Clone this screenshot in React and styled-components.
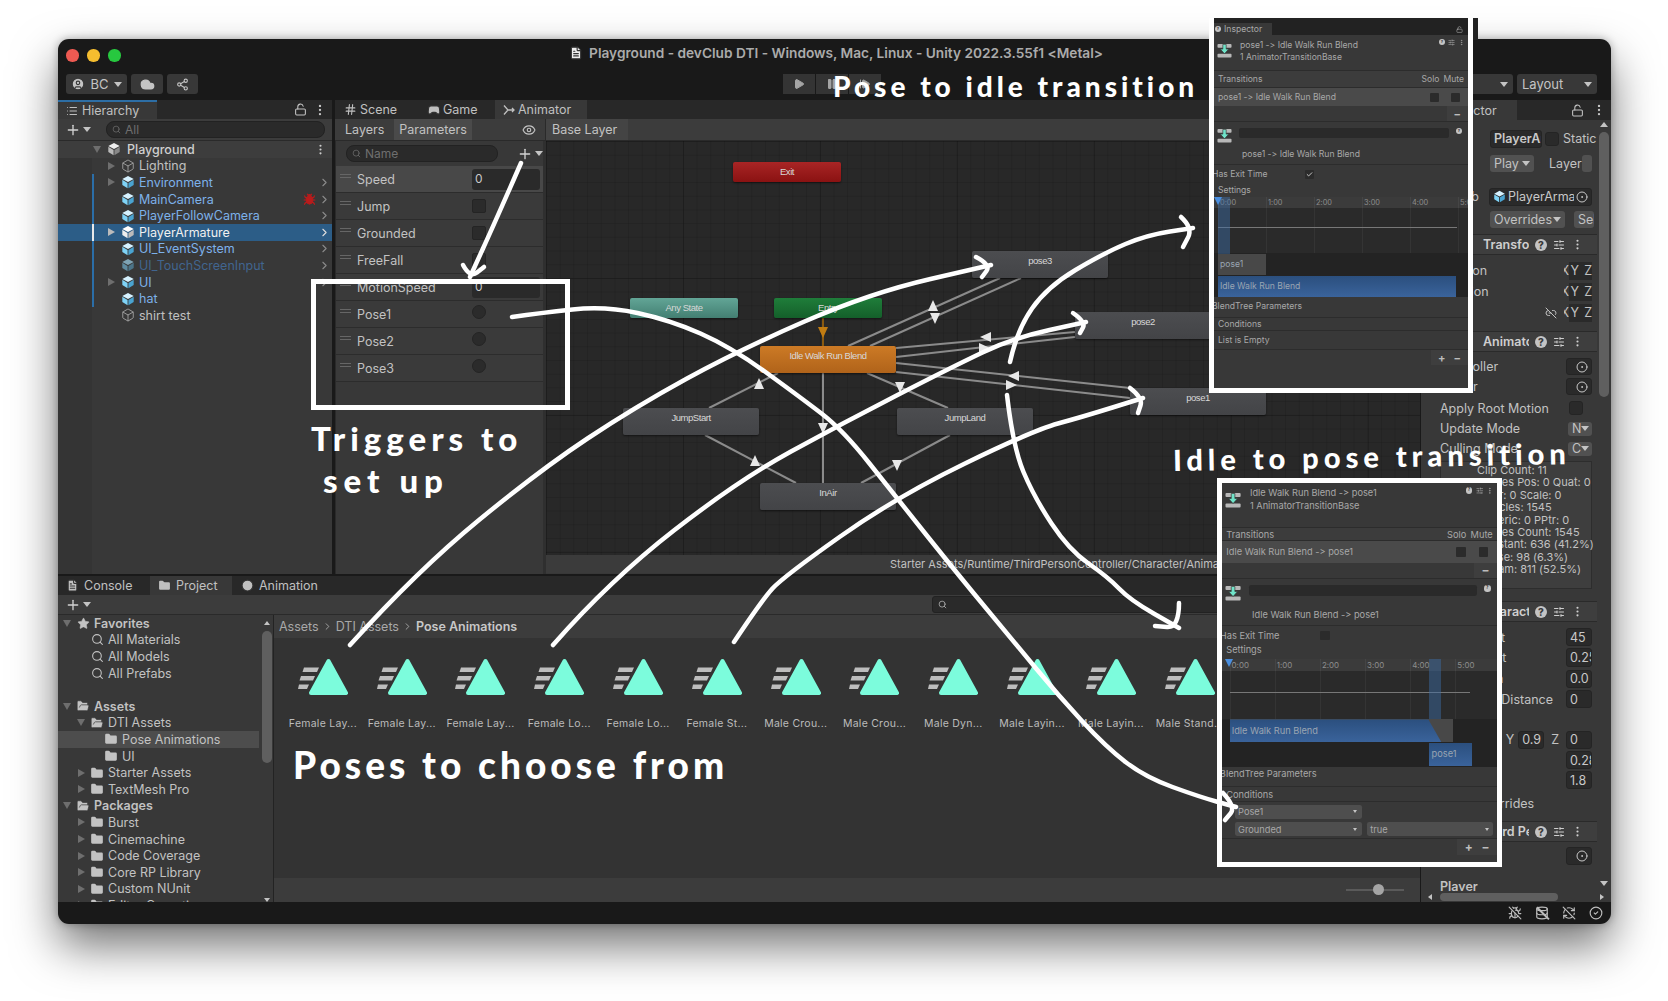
import React from 'react';
import styled, { createGlobalStyle } from 'styled-components';
import {
  Box,
  BugOff,
  Check,
  ChevronRight,
  CircleDot,
  CircleUser,
  Clock,
  Cloud,
  Database,
  EllipsisVertical,
  Eye,
  FileText,
  Folder,
  FolderOpen,
  Gamepad2,
  Hash,
  Link2Off,
  List,
  LockOpen,
  Pause,
  Play,
  Plus,
  RefreshCwOff,
  Search,
  Share2,
  SlidersHorizontal,
  Star,
  StepForward,
  Bug,
  Layers,
  CircleCheck,
} from 'lucide-react';

const GlobalStyle = createGlobalStyle`
  html, body { margin: 0; padding: 0; background: #fff; }
  body { font-family: Inter, "Liberation Sans", sans-serif; overflow: hidden; font-variant-ligatures: none; font-feature-settings: "calt" 0; }
  * { box-sizing: border-box; }
`;

//PAGE + WINDOW
const Page = styled.div`
  position: relative;
  width: 1668px;
  height: 1001px;
  padding: 39px 0 0 58px;
  overflow: hidden;
`;
const Window = styled.div`
  width: 1553px;
  height: 885px;
  background: #191919;
  border-radius: 11px;
  overflow: hidden;
  display: flex;
  flex-direction: column;
  color: #c2c2c2;
  font-size: 12.5px;
  box-shadow: 0 22px 46px rgba(0, 0, 0, 0.55), 0 0 8px rgba(0, 0, 0, 0.3);
`;
const TitleBar = styled.div`
  height: 31px;
  flex: none;
  padding: 0 0 3px 8px;
  display: grid;
  grid-template-columns: 1fr auto 1fr;
  align-items: center;
`;
const Lights = styled.div`
  display: flex;
  gap: 8.5px;
  padding-top: 5px;
`;
const Light = styled.span`
  width: 12.5px;
  height: 12.5px;
  border-radius: 50%;
  background: ${(p) => p.$c};
`;
const Title = styled.div`
  display: flex;
  align-items: center;
  gap: 6px;
  margin-right: 5px;
  font-weight: 600;
  font-size: 13.7px;
  color: #ababab;
  white-space: nowrap;
`;
const ToolBar = styled.div`
  height: 30px;
  flex: none;
  padding: 4px 14px 6px 8px;
  display: grid;
  grid-template-columns: 1fr auto 1fr;
`;
const ToolGroup = styled.div`
  display: flex;
  gap: ${(p) => p.$tight ? 1 : 4}px;
  justify-content: ${(p) => p.$end ? 'flex-end' : 'flex-start'};
`;
const ToolButton = styled.div`
  width: ${(p) => p.$w}px;
  height: 20px;
  background: #383838;
  border-radius: 3px;
  display: flex;
  align-items: center;
  justify-content: ${(p) => p.$spread ? 'space-between' : 'center'};
  padding: 0 ${(p) => p.$spread ? 5 : 0}px;
  gap: 5px;
  font-size: 13px;
  color: #c4c4c4;
`;
const PlayButton = styled(ToolButton)`
  background: #343434;
  border-radius: 0;
  color: #a4a4a4;
`;
const ToolLabel = styled.span`
  display: flex;
  align-items: center;
  gap: 4px;
`;
const Caret = styled.span`
  width: 0;
  height: 0;
  flex: none;
  border-left: ${(p) => p.$s || 4}px solid transparent;
  border-right: ${(p) => p.$s || 4}px solid transparent;
  border-top: ${(p) => (p.$s || 4) + 1}px solid #c4c4c4;
`;
const Workspace = styled.div`
  flex: 1;
  min-height: 0;
  display: flex;
  gap: 1px;
`;
const LeftColumn = styled.div`
  width: 1362px;
  flex: none;
  display: flex;
  flex-direction: column;
`;
const TopRow = styled.div`
  height: 474px;
  flex: none;
  display: flex;
  gap: 3px;
`;
const StatusBar = styled.div`
  height: 22px;
  flex: none;
  display: flex;
  justify-content: flex-end;
  align-items: center;
  gap: 13px;
  padding-right: 8px;
  color: #bdbdbd;
`;
const Slashed = styled.span`
  position: relative;
  display: flex;
  &::after {
    content: '';
    position: absolute;
    left: 7px;
    top: -1px;
    width: 1.5px;
    height: 17px;
    background: #bdbdbd;
    transform: rotate(-45deg);
  }
`;

//PANELS AND TABS
const Panel = styled.div`
  background: #383838;
  display: flex;
  flex-direction: column;
  min-width: 0;
  ${(p) => p.$w ? `width: ${p.$w}px; flex: none;` : 'flex: 1;'}
`;
const TabStrip = styled.div`
  height: ${(p) => p.$h || 19}px;
  flex: none;
  background: #282828;
  display: flex;
  align-items: center;
`;
const Tab = styled.div`
  width: ${(p) => p.$w}px;
  height: 100%;
  display: flex;
  align-items: center;
  gap: ${(p) => p.$gap || 5}px;
  padding-left: ${(p) => p.$pl || 8}px;
  font-size: 12.5px;
  color: #c0c0c0;
  background: ${(p) => p.$active ? '#383838' : 'transparent'};
  ${(p) => p.$accent && 'border-top: 2px solid #2d6ea5;'}
`;
const StripTools = styled.div`
  margin-left: auto;
  display: flex;
  align-items: center;
  gap: ${(p) => p.$gap || 5}px;
  padding-right: 5px;
`;
const SubBar = styled.div`
  height: ${(p) => p.$h || 22}px;
  flex: none;
  background: #3c3c3c;
  border-bottom: 1px solid #2a2a2a;
  display: flex;
  align-items: center;
`;
const SearchBox = styled.div`
  height: 17px;
  background: #2a2a2a;
  border: 1px solid #222;
  border-radius: ${(p) => p.$r || 8}px;
  width: ${(p) => p.$w}px;
  margin-left: ${(p) => p.$ml || 0}px;
  display: flex;
  align-items: center;
  gap: 4px;
  padding-left: 5px;
  font-size: 12px;
  color: #6f6f6f;
`;
const AddButton = styled.div`
  display: flex;
  align-items: center;
  gap: 2px;
  margin-left: ${(p) => p.$ml || 7}px;
  color: #d2d2d2;
`;

//HIERARCHY
const HierRows = styled.div`
  flex: 1;
  background: linear-gradient(90deg, #343434 34px, #383838 34px);
`;
const SceneRow = styled.div`
  height: 16.6px;
  background: #3d3d3d;
  display: flex;
  align-items: center;
  gap: 6px;
  padding: 0 5px 0 35px;
  font-weight: 500;
  color: #d0d0d0;
`;
const HierRow = styled.div`
  height: 16.6px;
  display: flex;
  align-items: center;
  padding-left: 34px;
  padding-right: 1px;
  background: ${(p) => p.$selected ? '#2c5d87' : 'transparent'};
`;
const PrefabBar = styled.span`
  width: 2px;
  height: 100%;
  flex: none;
  background: ${(p) => p.$selected ? '#e8e8e8' : p.$on ? '#2b6ea8' : 'transparent'};
`;
const ArrowSlot = styled.span`
  width: 27px;
  flex: none;
  padding-left: 14px;
  display: flex;
  align-items: center;
`;
const Arrow = styled.span`
  width: 0;
  height: 0;
  flex: none;
  border-top: 4.5px solid transparent;
  border-bottom: 4.5px solid transparent;
  border-left: 7px solid ${(p) => p.$light ? '#bbb' : '#6e6e6e'};
  ${(p) => p.$open && `
    border: 0 solid transparent;
    border-left: 4.5px solid transparent;
    border-right: 4.5px solid transparent;
    border-top: 7px solid #6e6e6e;
  `}
`;
const HierName = styled.span`
  margin-left: 4px;
  white-space: nowrap;
  font-size: 12.5px;
  color: ${(p) => p.$kind === 'selected' ? '#f0f0f0' : p.$kind === 'prefab' ? '#7db1ea' : p.$kind === 'off' ? '#41658f' : '#c0c0c0'};
`;
const RowEnd = styled.span`
  margin-left: auto;
  display: flex;
  align-items: center;
  gap: 2px;
  color: #8a8a8a;
`;

//ANIMATOR
const AnimatorBody = styled.div`
  flex: 1;
  min-height: 0;
  display: flex;
`;
const LayerTab = styled.div`
  height: 100%;
  padding: 0 ${(p) => p.$active ? 5 : 10}px;
  display: flex;
  align-items: center;
  font-size: 12.5px;
  background: ${(p) => p.$active ? '#4a4a4a' : 'transparent'};
`;
const EyeSlot = styled.span`
  margin-left: auto;
  display: flex;
`;
const BaseLayer = styled.div`
  width: 875px;
  flex: none;
  height: 100%;
  margin-left: 9px;
  padding: 0 12px 0 6px;
  display: flex;
  align-items: center;
  border-left: 1px solid #2a2a2a;
  background: linear-gradient(90deg, #444 82px, #3c3c3c 82px);
`;
const ParamList = styled.div`
  width: 211px;
  flex: none;
  border-left: 1px solid #2a2a2a;
  border-right: 3px solid #2f2f2f;
`;
const ParamSearch = styled.div`
  height: 25px;
  display: flex;
  align-items: center;
  padding-left: 10px;
`;
const ParamRow = styled.div`
  height: 27px;
  display: flex;
  align-items: center;
  padding-left: 4px;
  border-bottom: 1px solid #2c2c2c;
  background: ${(p) => p.$active ? '#484848' : '#3a3a3a'};
`;
const Grip = styled.span`
  width: 11px;
  height: 4px;
  flex: none;
  margin-bottom: 6px;
  border-top: 1px solid #666;
  border-bottom: 1px solid #666;
`;
const ParamName = styled.span`
  margin-left: 6px;
  width: 115px;
  flex: none;
  font-size: 12.5px;
`;
const NumberField = styled.span`
  width: 68px;
  height: 21px;
  background: #2a2a2a;
  border-radius: 3px;
  padding: 2px 3px;
  font-size: 12px;
  color: #c8c8c8;
`;
const CheckField = styled.span`
  width: 14px;
  height: 14px;
  background: #2b2b2b;
  border-radius: ${(p) => p.$round ? '50%' : '2px'};
  border: 1px solid #242424;
  margin-bottom: ${(p) => p.$round ? 5 : 0}px;
`;
const GraphColumn = styled.div`
  flex: 1;
  min-width: 0;
  display: flex;
  flex-direction: column;
`;
const Graph = styled.div`
  position: relative;
  height: 414px;
  flex: none;
  overflow: hidden;
  background-color: #282828;
  background-image:
    linear-gradient(rgba(0, 0, 0, 0.16) 1px, transparent 1px),
    linear-gradient(90deg, rgba(0, 0, 0, 0.16) 1px, transparent 1px),
    linear-gradient(rgba(0, 0, 0, 0.1) 1px, transparent 1px),
    linear-gradient(90deg, rgba(0, 0, 0, 0.1) 1px, transparent 1px);
  background-size: 137px 137px, 137px 137px, 13.7px 13.7px, 13.7px 13.7px;
`;
const NODE_FILL = {
  red: 'linear-gradient(#a92525, #8a1212)',
  teal: 'linear-gradient(#62a596, #437f72)',
  green: 'linear-gradient(#1f7d3a, #145f2a)',
  orange: 'linear-gradient(#cc7a25, #b0631a)',
  gray: 'linear-gradient(#4c4d50, #434447)',
};
const StateNode = styled.div`
  position: absolute;
  left: ${(p) => p.$x - 546}px;
  top: ${(p) => p.$y - 141}px;
  width: ${(p) => p.$short ? 108 : 136}px;
  height: ${(p) => p.$short ? 20 : 27}px;
  padding-top: 4px;
  border-radius: 2px;
  background: ${(p) => NODE_FILL[p.$fill || 'gray']};
  box-shadow: 0 1px 2px rgba(0, 0, 0, 0.5);
  text-align: center;
  font-family: "Liberation Sans", sans-serif;
  font-size: 9.5px;
  letter-spacing: -0.45px;
  color: #d8d8d8;
`;
const LinesSvg = styled.svg`
  position: absolute;
  inset: 0;
`;
const PathBar = styled.div`
  height: 18px;
  flex: none;
  background: #3b3b3b;
  padding: 2px 0 0 344px;
  font-size: 11px;
  white-space: nowrap;
  overflow: hidden;
`;

//PROJECT
const ProjectPanel = styled.div`
  flex: 1;
  min-height: 0;
  margin-top: 2px;
  background: #383838;
  display: flex;
  flex-direction: column;
`;
const ProjectBody = styled.div`
  flex: 1;
  min-height: 0;
  display: flex;
  gap: 1px;
  background: #232323;
`;
const TreePane = styled.div`
  width: 215px;
  flex: none;
  background: #383838;
  position: relative;
  overflow: hidden;
`;
const TreeRow = styled.div`
  height: 16.6px;
  width: 201px;
  display: flex;
  align-items: center;
  padding-left: ${(p) => 4 + 14 * p.$depth}px;
  background: ${(p) => p.$selected ? '#4d4d4d' : 'transparent'};
  font-weight: ${(p) => p.$bold ? 600 : 400};
  font-size: 12.5px;
  white-space: nowrap;
`;
const TreeArrow = styled.span`
  width: 10px;
  margin-right: 4px;
  flex: none;
  display: flex;
  justify-content: center;
`;
const TreeIcon = styled.span`
  width: 14px;
  flex: none;
  margin-right: 4px;
  display: flex;
  justify-content: center;
  color: #c2c2c2;
`;
const TreeGap = styled.div`
  height: 16.6px;
`;
const ScrollRail = styled.div`
  position: absolute;
  right: 1px;
  top: 0;
  bottom: 0;
  width: 11px;
  padding-top: 6px;
  display: flex;
  flex-direction: column;
  align-items: center;
  gap: 6px;
`;
const ScrollThumb = styled.span`
  width: 10px;
  height: ${(p) => p.$h}px;
  border-radius: 5px;
  background: #5f5f5f;
`;
const Spacer = styled.span`
  flex: 1;
`;
const UpCaret = styled(Caret)`
  transform: rotate(180deg);
`;
const BrowserPane = styled.div`
  flex: 1;
  min-width: 0;
  display: flex;
  flex-direction: column;
  background: #333;
`;
const Breadcrumbs = styled.div`
  height: 23px;
  flex: none;
  background: #3c3c3c;
  padding-left: 5px;
  display: flex;
  align-items: center;
  gap: 3px;
  font-size: 12.5px;
  color: #a8a8a8;
`;
const CrumbNow = styled.span`
  font-weight: 600;
  color: #c8c8c8;
`;
const AssetGrid = styled.div`
  flex: 1;
  display: flex;
  padding: 20px 0 0 9.5px;
  overflow: hidden;
`;
const Tile = styled.div`
  width: 78.8px;
  flex: none;
  display: flex;
  flex-direction: column;
  align-items: center;
`;
const TileLabel = styled.span`
  margin-top: 21px;
  font-size: 10.5px;
  letter-spacing: 0.25px;
  white-space: nowrap;
  color: #bcbcbc;
`;
const BrowserFoot = styled.div`
  height: 24px;
  flex: none;
  background: #3c3c3c;
  display: flex;
  justify-content: flex-end;
  align-items: center;
  padding-right: 16px;
`;
const ZoomSlider = styled.div`
  position: relative;
  width: 58px;
  height: 2px;
  background: #5a5a5a;
`;
const ZoomKnob = styled.span`
  position: absolute;
  left: 27px;
  top: -5px;
  width: 11px;
  height: 11px;
  border-radius: 50%;
  background: #a5a5a5;
`;

//INSPECTOR
const InspectorPanel = styled(Panel)`
  position: relative;
  overflow: hidden;
`;
const InspectorBody = styled.div`
  width: 176px;
  flex: 1;
  padding-top: 9px;
  overflow: hidden;
  white-space: nowrap;
`;
const InsRow = styled.div`
  height: ${(p) => p.$h || 21}px;
  margin-top: ${(p) => p.$mt || 0}px;
  padding: 0 5px 0 ${(p) => p.$pl === undefined ? 19 : p.$pl}px;
  display: flex;
  align-items: center;
  font-size: 12.5px;
`;
const InsLabel = styled.span`
  flex: none;
  width: ${(p) => p.$w ? `${p.$w}px` : 'auto'};
  margin-left: ${(p) => p.$auto ? 'auto' : `${p.$ml || 0}px`};
  font-weight: ${(p) => p.$bold ? 600 : 400};
`;
const InsField = styled.span`
  flex: none;
  width: ${(p) => p.$w}px;
  height: ${(p) => p.$h || 18}px;
  margin-left: ${(p) => p.$ml === undefined ? 'auto' : `${p.$ml}px`};
  margin-right: ${(p) => p.$mr || 0}px;
  background: #2a2a2a;
  border: 1px solid #242424;
  border-radius: 3px;
  padding: 0 3px;
  display: flex;
  align-items: center;
  justify-content: ${(p) => p.$target ? 'flex-end' : 'flex-start'};
  gap: 2px;
  overflow: hidden;
  color: #c8c8c8;
  font-weight: ${(p) => p.$bold ? 600 : 400};
`;
const FieldText = styled.span`
  flex: 1;
  overflow: hidden;
`;
const InsDrop = styled.span`
  flex: none;
  width: ${(p) => p.$w}px;
  height: ${(p) => p.$h || 17}px;
  margin-left: ${(p) => p.$ml === undefined ? 'auto' : `${p.$ml}px`};
  background: #515151;
  border-radius: 3px;
  padding: 0 4px;
  display: flex;
  align-items: center;
  justify-content: space-between;
  overflow: hidden;
`;
const InsSection = styled.div`
  height: 21px;
  margin-top: ${(p) => p.$mt || 0}px;
  padding: 0 7px 0 62px;
  background: #3e3e3e;
  border-top: 1px solid #2a2a2a;
  border-bottom: 1px solid #2a2a2a;
  display: flex;
  align-items: center;
  gap: 6px;
  font-weight: 600;
  font-size: 12.5px;
  color: #cfcfcf;
`;
const SectionTitle = styled.span`
  width: 46px;
  flex: none;
  overflow: hidden;
`;
const Help = styled.span.attrs({ children: '?' })`
  width: ${(p) => p.$s || 12}px;
  height: ${(p) => p.$s || 12}px;
  flex: none;
  border-radius: 50%;
  background: #c4c4c4;
  color: #383838;
  font-size: ${(p) => (p.$s || 12) - 2}px;
  line-height: ${(p) => p.$s || 12}px;
  font-weight: 800;
  text-align: center;
`;
const Axis = styled.span`
  width: ${(p) => p.$w}px;
  height: 18px;
  flex: none;
  overflow: hidden;
  display: flex;
  justify-content: flex-end;
  align-items: center;
  margin-left: ${(p) => p.$auto ? 'auto' : 0};
  background: ${(p) => p.$dark ? '#2a2a2a' : 'transparent'};
`;
const InfoBox = styled.div`
  width: 152px;
  height: 128px;
  margin: 3px 0 0 19px;
  border: 1px solid #2d2d2d;
  padding: 2px 0 0 36px;
  background: #3e3e3e;
  font-size: 11px;
  line-height: 12.4px;
`;
const VScroll = styled.div`
  position: absolute;
  right: 2px;
  top: 22px;
  bottom: 16px;
  width: 10px;
  display: flex;
  flex-direction: column;
  align-items: center;
  gap: 5px;
`;
const HScroll = styled.div`
  height: 11px;
  flex: none;
  padding: 0 6px;
  display: flex;
  align-items: center;
  gap: 6px;
`;
const HThumb = styled.span`
  width: 118px;
  height: 8px;
  margin-left: 1px;
  margin-right: auto;
  border-radius: 4px;
  background: #5f5f5f;
`;
const LeftCaret = styled(Caret)`
  transform: rotate(90deg);
`;
const RightCaret = styled(Caret)`
  transform: rotate(-90deg);
`;

//PASTED TRANSITION SHOTS
const ShotFrame = styled.div`
  position: absolute;
  left: ${(p) => p.$x}px;
  top: ${(p) => p.$y}px;
  width: ${(p) => p.$w}px;
  height: ${(p) => p.$h}px;
  border: 5px solid #fff;
  border-top-width: ${(p) => p.$topW}px;
  background: #383838;
  overflow: hidden;
`;
const ShotInner = styled.div`
  zoom: ${(p) => p.$zoom};
  color: #a8a8a8;
  font-size: 8.6px;
  white-space: nowrap;
`;
const ShotTabs = styled.div`
  height: 17px;
  background: #222;
  padding-top: 5px;
  display: flex;
`;
const ShotTab = styled.div`
  width: 58px;
  background: #383838;
  display: flex;
  align-items: center;
  gap: 3px;
  padding-left: 1px;
`;
const ShotHeader = styled.div`
  height: ${(p) => p.$h}px;
  display: flex;
  padding: ${(p) => p.$pt}px 3px 0 3px;
  gap: 8px;
  border-bottom: 1px solid #2c2c2c;
  line-height: 12px;
`;
const ShotIconWrap = styled.span`
  margin-top: 4px;
`;
const ShotHelp = styled.span`
  margin-left: auto;
  display: flex;
  gap: 3px;
`;
const ShotBar = styled.div`
  height: ${(p) => p.$h}px;
  display: flex;
  align-items: center;
  padding: 0 ${(p) => p.$pr === undefined ? 4 : p.$pr}px ${(p) => p.$pb || 0}px 4px;
  background: ${(p) => p.$bg || 'transparent'};
  border-bottom: ${(p) => p.$line ? '1px solid #2c2c2c' : '0'};
`;
const CutLabel = styled.span`
  margin-left: -6px;
  width: ${(p) => p.$w ? `${p.$w}px` : 'auto'};
  flex: none;
`;
const MiniCheck = styled.span`
  width: 9px;
  height: 9px;
  flex: none;
  margin-left: ${(p) => p.$first ? 'auto' : `${p.$ml || 0}px`};
  margin-right: ${(p) => p.$mr || 0}px;
  border-radius: 1px;
  background: #2b2b2b;
  display: flex;
  align-items: center;
  justify-content: center;
  color: #ddd;
`;
const HeadCells = styled.span`
  margin-left: auto;
  display: flex;
  gap: 4px;
`;
const FootTab = styled.span`
  margin-left: auto;
  height: 100%;
  padding: 0 7px;
  background: #3e3e3e;
  display: flex;
  align-items: center;
  gap: 8px;
  font-size: 11px;
  font-weight: 700;
  color: #bdbdbd;
`;
const ShotSection = styled.div`
  height: ${(p) => p.$h}px;
  position: relative;
  display: flex;
  padding: 6px 6px 0 3px;
  gap: 7px;
  border-bottom: 1px solid #2c2c2c;
`;
const ShotInput = styled.span`
  flex: 1;
  height: 10px;
  background: #2a2a2a;
  border-radius: 2px;
`;
const ShotCaption = styled.span`
  position: absolute;
  left: 28px;
  bottom: 5px;
`;
const Timeline = styled.div`
  position: relative;
  height: 100px;
  overflow: hidden;
  background: linear-gradient(#3b3b3b 11px, #2a2a2a 11px, #2a2a2a 56px, #232323 56px);
`;
const RulerMark = styled.span`
  position: absolute;
  top: 0;
  height: 56px;
  left: ${(p) => p.$x}px;
  padding: 1px 0 0 1px;
  font-size: 7.4px;
  line-height: 10px;
  color: #8d8d8d;
  border-left: 1px solid rgba(255, 255, 255, 0.05);
`;
const CurveLine = styled.span`
  position: absolute;
  left: ${(p) => p.$x}px;
  width: ${(p) => p.$w}px;
  top: 30px;
  height: 1px;
  background: #777;
`;
const BlendColumn = styled.span`
  position: absolute;
  left: ${(p) => p.$x}px;
  width: ${(p) => p.$w}px;
  top: 0;
  height: ${(p) => p.$h}px;
  background: rgba(60, 110, 170, 0.45);
`;
const PlayHead = styled.span`
  position: absolute;
  left: ${(p) => p.$x}px;
  top: 0;
  width: 0;
  height: 0;
  border-left: 4.5px solid transparent;
  border-right: 4.5px solid transparent;
  border-top: 8px solid #4a8fe0;
`;
const Clip = styled.span`
  position: absolute;
  left: ${(p) => p.$x}px;
  width: ${(p) => p.$w}px;
  top: ${(p) => p.$y}px;
  height: 21px;
  padding: 5px 2px 0;
  color: #9aa5b2;
  background: ${(p) => p.$blue ? 'linear-gradient(#2b4f7e, #3a639b)' : '#484848'};
  clip-path: ${(p) => p.$taper ? 'polygon(0 0, calc(100% - 12px) 0, 100% 100%, 0 100%)' : 'none'};
`;
const ConditionList = styled.div`
  padding: 1px 0 0;
  border-bottom: 1px solid #2c2c2c;
`;
const ConditionRow = styled.div`
  height: 16px;
  display: flex;
  align-items: center;
  gap: 5px;
  padding-left: 12px;
`;
const ConditionSelect = styled.span`
  width: ${(p) => p.$w}px;
  height: 13px;
  background: #4e4e4e;
  border-radius: 2px;
  padding: 0 4px 0 3px;
  display: flex;
  align-items: center;
  justify-content: space-between;
`;

//MARKUP ON TOP OF THE SCREENSHOT
const InkLayer = styled.svg`
  position: absolute;
  inset: 0;
  pointer-events: none;
`;
const Note = styled.span`
  position: absolute;
  left: ${(p) => p.$x}px;
  top: ${(p) => p.$y}px;
  font-family: Lato, "Open Sans", sans-serif;
  font-weight: 900;
  font-size: ${(p) => p.$size}px;
  letter-spacing: ${(p) => p.$ls}px;
  line-height: 1;
  color: #fff;
  white-space: nowrap;
  transform: rotate(${(p) => p.$rot || 0}deg);
  transform-origin: left center;
`;
const PasteEdge = styled.span`
  position: absolute;
  left: 1473px;
  top: 18px;
  width: 5px;
  height: 22px;
  background: #222;
`;
const InkBox = styled.div`
  position: absolute;
  left: 311px;
  top: 279px;
  width: 259px;
  height: 131px;
  border: 5px solid #fff;
`;

const CubeIcon = ({ size = 14, color = '#7fd3f7', side = '#4aa3d0', top = '#d6f2ff' }) => (
  <svg width={size} height={size} viewBox='0 0 16 16' style={{ flex: 'none' }}>
    <path d='M8 1 14.5 4.5 8 8 1.5 4.5z' fill={top} />
    <path d='M1.5 5.5 7.5 9v6l-6-3.5z' fill={color} />
    <path d='M14.5 5.5 8.5 9v6l6-3.5z' fill={side} />
  </svg>
);

const AnimatorIcon = () => (
  <svg width='12' height='12' viewBox='0 0 12 12' fill='none' stroke='#c0c0c0' strokeWidth='1.3'>
    <path d='M1 1.5 5 6 1 10.5M5 6h6M9 4l2 2-2 2' />
  </svg>
);

const TransitionIcon = ({ size = 15 }) => (
  <svg width={size} height={size} viewBox='0 0 16 16' style={{ flex: 'none' }}>
    <rect x='0.5' y='1' width='15' height='4' rx='1' fill='#b8b8b8' />
    <rect x='0.5' y='11.5' width='15' height='4' rx='1' fill='#b8b8b8' />
    <path d='M6.2 1.5h3.6v5h2.7L8 11.5 3.5 6.5h2.7z' fill='#6fe3c8' stroke='#383838' strokeWidth='.7' />
  </svg>
);

const AssetIcon = () => (
  <svg width='50' height='38' viewBox='0 0 50 38'>
    <path d='M6 9.5h15l-2 4.5H4.5z M3 18h14l-2 4.5H1.5z M1 26.5h10l-2 4.5H0z' fill='#bdbdbd' />
    <polygon points='30.5,3 48,35 13,35' fill='#7cfcdc' stroke='#7cfcdc' strokeWidth='4' strokeLinejoin='round' />
  </svg>
);

const Tri = ({ x, y, a = 0, fill = '#e8e8e8' }) => (
  <polygon points='0,6 -5,-5 5,-5' fill={fill} transform={`translate(${x} ${y}) rotate(${a})`} />
);

// state machine lines, in window coordinates
const LINKS = [
  [848, 346, 1000, 278], [870, 346, 1021, 278],
  [896, 348, 1075, 332], [896, 357, 1075, 337],
  [896, 363, 1130, 388], [896, 372, 1130, 398],
  [823, 373, 823, 483],
  [709, 408, 778, 373], [867, 373, 948, 408],
  [705, 435, 796, 483], [950, 435, 861, 483],
];

const hierarchy = [
  { name: 'Lighting', arrow: true, kind: 'plain' },
  { name: 'Environment', arrow: true, kind: 'prefab', bar: true, more: true },
  { name: 'MainCamera', kind: 'prefab', bar: true, more: true, bug: true },
  { name: 'PlayerFollowCamera', kind: 'prefab', bar: true, more: true },
  { name: 'PlayerArmature', arrow: true, kind: 'selected', bar: true, more: true },
  { name: 'UI_EventSystem', kind: 'prefab', bar: true, more: true },
  { name: 'UI_TouchScreenInput', kind: 'off', bar: true, more: true },
  { name: 'UI', arrow: true, kind: 'prefab', bar: true, more: true },
  { name: 'hat', kind: 'prefab', bar: true },
  { name: 'shirt test', kind: 'plain' },
];

const params = [
  { name: 'Speed', type: 'number', active: true },
  { name: 'Jump', type: 'bool' },
  { name: 'Grounded', type: 'bool' },
  { name: 'FreeFall', type: 'bool' },
  { name: 'MotionSpeed', type: 'number' },
  { name: 'Pose1', type: 'trigger' },
  { name: 'Pose2', type: 'trigger' },
  { name: 'Pose3', type: 'trigger' },
];

const projectTree = [
  { name: 'Favorites', depth: 0, open: true, bold: true, icon: 'star' },
  { name: 'All Materials', depth: 1, icon: 'search' },
  { name: 'All Models', depth: 1, icon: 'search' },
  { name: 'All Prefabs', depth: 1, icon: 'search' },
  { gap: true },
  { name: 'Assets', depth: 0, open: true, bold: true, icon: 'open' },
  { name: 'DTI Assets', depth: 1, open: true, icon: 'open' },
  { name: 'Pose Animations', depth: 2, icon: 'folder', selected: true },
  { name: 'UI', depth: 2, icon: 'folder' },
  { name: 'Starter Assets', depth: 1, closed: true, icon: 'folder' },
  { name: 'TextMesh Pro', depth: 1, closed: true, icon: 'folder' },
  { name: 'Packages', depth: 0, open: true, bold: true, icon: 'open' },
  { name: 'Burst', depth: 1, closed: true, icon: 'folder' },
  { name: 'Cinemachine', depth: 1, closed: true, icon: 'folder' },
  { name: 'Code Coverage', depth: 1, closed: true, icon: 'folder' },
  { name: 'Core RP Library', depth: 1, closed: true, icon: 'folder' },
  { name: 'Custom NUnit', depth: 1, closed: true, icon: 'folder' },
  { name: 'Editor Coroutines', depth: 1, closed: true, icon: 'folder' },
];

const assets = [
  'Female Lay...', 'Female Lay...', 'Female Lay...', 'Female Lo...', 'Female Lo...', 'Female St...',
  'Male Crou...', 'Male Crou...', 'Male Dyn...', 'Male Layin...', 'Male Layin...', 'Male Stand...',
];

const treeIcon = (kind) => {
  if (kind === 'star') return <Star size={13} fill='#c2c2c2' strokeWidth={1} />;
  if (kind === 'search') return <Search size={13} />;
  if (kind === 'open') return <FolderOpen size={14} fill='#c2c2c2' stroke='#383838' strokeWidth={1.2} />;
  return <Folder size={14} fill='#c2c2c2' strokeWidth={0} />;
};

const InspectorSection = ({ title, mt }) => (
  <InsSection $mt={mt}>
    <SectionTitle>{title}</SectionTitle>
    <Help />
    <SlidersHorizontal size={12} />
    <EllipsisVertical size={13} />
  </InsSection>
);

const VectorRow = ({ label, link, mt }) => (
  <InsRow $mt={mt}>
    <InsLabel>{label}</InsLabel>
    {link && <Link2Off size={12} style={{ marginLeft: 'auto', marginRight: 7 }} />}
    <Axis $w={5} $auto={!link}>X</Axis>
    <Axis $dark $w={10}>Y</Axis>
    <Axis $dark $w={13}>Z</Axis>
  </InsRow>
);

const TargetField = ({ h = 17 }) => (
  <InsField $w={26} $h={h} $target><CircleDot size={12} /></InsField>
);

const Inspector = () => (
  <InspectorPanel>
    <TabStrip $h={20}>
      <Tab $w={96} $active $pl={20}>Inspector</Tab>
      <StripTools $gap={8}>
        <LockOpen size={13} />
        <EllipsisVertical size={14} />
      </StripTools>
    </TabStrip>
    <InspectorBody>
      <InsRow $h={19} $pl={69}>
        <InsField $w={52} $ml={0} $bold>PlayerArmature</InsField>
        <InsField $w={14} $h={14} $ml={3} />
        <InsLabel $ml={4}>Static</InsLabel>
      </InsRow>
      <InsRow $h={17} $mt={7}>
        <InsLabel $w={50}>Tag</InsLabel>
        <InsDrop $w={44} $ml={0}>Play<Caret /></InsDrop>
        <InsLabel $ml={15}>Layer</InsLabel>
        <InsDrop $w={10} />
      </InsRow>
      <InsRow $h={17} $mt={16}>
        <InsLabel $w={49}>Prefab</InsLabel>
        <InsField $w={103} $ml={0}>
          <CubeIcon size={13} />
          <FieldText>PlayerArma</FieldText>
          <CircleDot size={12} />
        </InsField>
      </InsRow>
      <InsRow $h={17} $mt={6} $pl={69}>
        <InsDrop $w={75} $ml={0}>Overrides<Caret /></InsDrop>
        <InsDrop $w={20} $ml={9}>Select</InsDrop>
      </InsRow>
      <InspectorSection title='Transform' mt={6} />
      <VectorRow label='Position' mt={5} />
      <VectorRow label='Rotation' />
      <VectorRow label='Scale' link />
      <InspectorSection title='Animator' mt={8} />
      <InsRow $mt={6} $h={17}>
        <InsLabel>Controller</InsLabel>
        <TargetField />
      </InsRow>
      <InsRow $mt={3} $h={17}>
        <InsLabel>Avatar</InsLabel>
        <TargetField />
      </InsRow>
      <InsRow $mt={3} $h={20}>
        <InsLabel>Apply Root Motion</InsLabel>
        <InsField $w={14} $h={14} $mr={9} />
      </InsRow>
      <InsRow>
        <InsLabel>Update Mode</InsLabel>
        <InsDrop $w={24} $h={14}>N<Caret /></InsDrop>
      </InsRow>
      <InsRow $h={19}>
        <InsLabel>Culling Mode</InsLabel>
        <InsDrop $w={24} $h={14}>C<Caret /></InsDrop>
      </InsRow>
      <InfoBox>
        Clip Count: 11<br />
        Curves Pos: 0 Quat: 0<br />
        Euler: 0 Scale: 0<br />
        Muscles: 1545<br />
        Generic: 0 PPtr: 0<br />
        Curves Count: 1545<br />
        Constant: 636 (41.2%)<br />
        Dense: 98 (6.3%)<br />
        Stream: 811 (52.5%)
      </InfoBox>
      <InspectorSection title='Character' mt={12} />
      <InsRow $mt={5} $h={20}>
        <InsLabel>Slope Limit</InsLabel>
        <InsField $w={26} $h={18}>45</InsField>
      </InsRow>
      <InsRow $h={21}>
        <InsLabel>Step Offset</InsLabel>
        <InsField $w={26} $h={19}>0.25</InsField>
      </InsRow>
      <InsRow $h={21}>
        <InsLabel>Skin Width</InsLabel>
        <InsField $w={26} $h={18}>0.0</InsField>
      </InsRow>
      <InsRow $h={20}>
        <InsLabel>Min Move Distance</InsLabel>
        <InsField $w={26} $h={18}>0</InsField>
      </InsRow>
      <InsRow $mt={20} $h={21}>
        <InsLabel>Center X</InsLabel>
        <InsLabel $auto>Y</InsLabel>
        <InsField $w={26} $ml={4}>0.9</InsField>
        <InsLabel $ml={7}>Z</InsLabel>
        <InsField $w={26} $ml={7}>0</InsField>
      </InsRow>
      <InsRow $h={20}>
        <InsLabel>Radius</InsLabel>
        <InsField $w={26} $h={18}>0.28</InsField>
      </InsRow>
      <InsRow $h={20}>
        <InsLabel>Height</InsLabel>
        <InsField $w={26} $h={18}>1.8</InsField>
      </InsRow>
      <InsRow $h={20} $mt={3}>
        <InsLabel>Layer Overrides</InsLabel>
      </InsRow>
      <InspectorSection title='Third Pers' mt={8} />
      <InsRow $mt={4} $h={19}>
        <InsLabel>Animator</InsLabel>
        <TargetField h={18} />
      </InsRow>
      <InsRow $mt={12} $h={18}>
        <InsLabel $bold>Player</InsLabel>
      </InsRow>
    </InspectorBody>
    <HScroll>
      <LeftCaret $s={3} />
      <HThumb />
      <RightCaret $s={3} />
    </HScroll>
    <VScroll>
      <UpCaret $s={4} />
      <ScrollThumb $h={265} />
      <Spacer />
      <Caret $s={4} />
    </VScroll>
  </InspectorPanel>
);

const TransitionShot = ({ x, y, w, h, topW, zoom, title, tabbed, hasExit, sizes, timeline, conditions }) => (
  <ShotFrame $x={x} $y={y} $w={w} $h={h} $topW={topW}>
    <ShotInner $zoom={zoom}>
      {tabbed && (
        <ShotTabs>
          <ShotTab><Help $s={6} />Inspector</ShotTab>
          <StripTools><LockOpen size={7} /></StripTools>
        </ShotTabs>
      )}
      <ShotHeader $h={sizes.header} $pt={sizes.headerPt}>
        <ShotIconWrap><TransitionIcon /></ShotIconWrap>
        <div>
          {title}<br />
          1 AnimatorTransitionBase
        </div>
        <ShotHelp><Help $s={6} /><SlidersHorizontal size={7} /><EllipsisVertical size={7} /></ShotHelp>
      </ShotHeader>
      <ShotBar $h={sizes.head} $bg='#3c3c3c' $line>
        Transitions
        <HeadCells><span>Solo</span><span>Mute</span></HeadCells>
      </ShotBar>
      <ShotBar $h={sizes.row} $bg='#4a4a4a'>
        {title}
        <MiniCheck $first />
        <MiniCheck $ml={12} $mr={4} />
      </ShotBar>
      <ShotBar $h={sizes.foot} $pr={0} $line>
        <FootTab>−</FootTab>
      </ShotBar>
      <ShotSection $h={sizes.section}>
        <TransitionIcon />
        <ShotInput />
        <Help $s={6} />
        <ShotCaption>{title}</ShotCaption>
      </ShotSection>
      <ShotBar $h={sizes.exit}>
        <CutLabel $w={93}>Has Exit Time</CutLabel>
        <MiniCheck>{hasExit && <Check size={7} strokeWidth={3} />}</MiniCheck>
      </ShotBar>
      <ShotBar $h={sizes.settings} $pb={sizes.settingsPb}>Settings</ShotBar>
      <Timeline>
        {[0, 1, 2, 3, 4, 5].map((n) => (
          <RulerMark key={n} $x={timeline.start + n * timeline.step}>{n}:00</RulerMark>
        ))}
        <CurveLine $x={timeline.start} $w={timeline.curve} />
        <BlendColumn $x={timeline.colX} $w={timeline.colW} $h={timeline.colH} />
        {timeline.clips.map((c) => (
          <Clip key={c.label + c.x} $x={c.x} $y={c.y} $w={c.w} $blue={c.blue} $taper={c.taper}>{c.label}</Clip>
        ))}
        <PlayHead $x={timeline.start - 4} />
      </Timeline>
      <ShotBar $h={sizes.blend} $pb={sizes.blendPb} $line><CutLabel>BlendTree Parameters</CutLabel></ShotBar>
      <ShotBar $h={sizes.cond} $line>Conditions</ShotBar>
      {conditions.length === 0 ? (
        <ShotBar $h={19} $line>List is Empty</ShotBar>
      ) : (
        <ConditionList>
          {conditions.map((c) => (
            <ConditionRow key={c.name}>
              <ConditionSelect $w={118}>{c.name}<Caret $s={2} /></ConditionSelect>
              {c.value && <ConditionSelect $w={117}>{c.value}<Caret $s={2} /></ConditionSelect>}
            </ConditionRow>
          ))}
        </ConditionList>
      )}
      <ShotBar $h={15} $pr={0}>
        <FootTab>+ <span>−</span></FootTab>
      </ShotBar>
    </ShotInner>
  </ShotFrame>
);

// smooth pen stroke through the given points
const smooth = (pts) => {
  let d = `M${pts[0][0]} ${pts[0][1]}`;
  for (let i = 1; i < pts.length - 1; i++) {
    const mx = (pts[i][0] + pts[i + 1][0]) / 2;
    const my = (pts[i][1] + pts[i + 1][1]) / 2;
    d += ` Q${pts[i][0]} ${pts[i][1]} ${mx} ${my}`;
  }
  const last = pts[pts.length - 1];
  return `${d} L${last[0]} ${last[1]}`;
};

const INK = [
  [[521, 163], [496, 220], [470, 277]],
  [[463, 265], [470, 278], [484, 267]],
  [[512, 317], [540, 313], [605, 306], [670, 320], [731, 347], [800, 397], [843, 430], [896, 497], [960, 577], [1015, 643], [1058, 695], [1106, 747], [1145, 777], [1200, 797], [1236, 807]],
  [[1223, 793], [1236, 807], [1225, 820]],
  [[350, 645], [418, 570], [540, 470], [635, 407], [739, 350], [870, 293], [991, 265]],
  [[976, 257], [991, 265], [982, 277]],
  [[553, 645], [610, 580], [739, 480], [843, 423], [952, 367], [1013, 338], [1086, 322]],
  [[1073, 313], [1086, 322], [1080, 333]],
  [[734, 642], [762, 600], [783, 577], [896, 497], [1034, 430], [1082, 417], [1143, 398]],
  [[1130, 388], [1143, 398], [1138, 413]],
  [[1010, 362], [1017, 330], [1047, 287], [1104, 253], [1147, 235], [1193, 228]],
  [[1181, 217], [1193, 228], [1183, 247]],
  [[1007, 395], [1013, 447], [1034, 497], [1069, 550], [1108, 577], [1130, 600], [1179, 628]],
  [[1179, 603], [1179, 628], [1155, 626]],
];

const App = () => {
  return (
    <Page>
      <GlobalStyle />
      <Window>
        <TitleBar>
          <Lights>
            <Light $c='#ee5a52' />
            <Light $c='#f5bd2f' />
            <Light $c='#27c83f' />
          </Lights>
          <Title><FileText size={14} fill='#eee' stroke='#333' />Playground - devClub DTI - Windows, Mac, Linux - Unity 2022.3.55f1 &lt;Metal&gt;</Title>
          <span />
        </TitleBar>
        <ToolBar>
          <ToolGroup>
            <ToolButton $w={61} $spread><CircleUser size={14} fill='#c4c4c4' stroke='#383838' />BC<Caret /></ToolButton>
            <ToolButton $w={32}><Cloud size={15} fill='#c4c4c4' /></ToolButton>
            <ToolButton $w={31}><Share2 size={13} /></ToolButton>
          </ToolGroup>
          <ToolGroup $tight>
            <PlayButton $w={32}><Play size={12} fill='#a4a4a4' /></PlayButton>
            <PlayButton $w={32}><Pause size={12} fill='#a4a4a4' /></PlayButton>
            <PlayButton $w={32}><StepForward size={12} fill='#a4a4a4' /></PlayButton>
          </ToolGroup>
          <ToolGroup $end>
            <ToolButton $w={106} $spread>
              <ToolLabel><Layers size={12} />Layers</ToolLabel>
              <Caret />
            </ToolButton>
            <ToolButton $w={80} $spread>Layout<Caret /></ToolButton>
          </ToolGroup>
        </ToolBar>
        <Workspace>
          <LeftColumn>
            <TopRow>
              <Panel $w={274}>
                <TabStrip>
                  <Tab $w={99} $active $accent $gap={4}><List size={12} />Hierarchy</Tab>
                  <StripTools $gap={6}>
                    <LockOpen size={13} />
                    <EllipsisVertical size={14} />
                  </StripTools>
                </TabStrip>
                <SubBar>
                  <AddButton><Plus size={16} /><Caret /></AddButton>
                  <SearchBox $w={219} $ml={15}><Search size={9} />All</SearchBox>
                </SubBar>
                <HierRows>
                  <SceneRow>
                    <Arrow $open />
                    <CubeIcon color='#bbb' side='#888' top='#eee' />
                    Playground
                    <RowEnd><EllipsisVertical size={13} color='#ccc' /></RowEnd>
                  </SceneRow>
                  {hierarchy.map((row) => (
                    <HierRow key={row.name} $selected={row.kind === 'selected'}>
                      <PrefabBar $on={row.bar} $selected={row.kind === 'selected'} />
                      <ArrowSlot>{row.arrow && <Arrow $light={row.kind === 'selected'} />}</ArrowSlot>
                      {row.kind === 'plain' && <Box size={14} strokeWidth={1.2} />}
                      {row.kind === 'off' && <CubeIcon color='#5f8ba0' side='#4c7488' top='#7ea3b4' />}
                      {row.kind === 'prefab' && <CubeIcon />}
                      {row.kind === 'selected' && <CubeIcon color='#eee' side='#bbb' top='#fff' />}
                      <HierName $kind={row.kind}>{row.name}</HierName>
                      <RowEnd>
                        {row.bug && <Bug size={13} fill='#b81c1c' color='#b81c1c' />}
                        {row.more && <ChevronRight size={13} color={row.kind === 'selected' ? '#ddd' : '#8a8a8a'} />}
                      </RowEnd>
                    </HierRow>
                  ))}
                </HierRows>
              </Panel>
              <Panel>
                <TabStrip>
                  <Tab $w={86} $pl={9} $gap={3}><Hash size={13} />Scene</Tab>
                  <Tab $w={74} $pl={6} $gap={2}><Gamepad2 size={14} fill='#c0c0c0' stroke='#333' />Game</Tab>
                  <Tab $w={92} $active $pl={8} $gap={3}><AnimatorIcon />Animator</Tab>
                </TabStrip>
                <SubBar>
                  <LayerTab>Layers</LayerTab>
                  <LayerTab $active>Parameters</LayerTab>
                  <EyeSlot><Eye size={14} /></EyeSlot>
                  <BaseLayer>Base Layer</BaseLayer>
                </SubBar>
                <AnimatorBody>
                  <ParamList>
                    <ParamSearch>
                      <SearchBox $w={152}><Search size={9} />Name</SearchBox>
                      <AddButton $ml={19}><Plus size={16} /><Caret /></AddButton>
                    </ParamSearch>
                    {params.map((p) => (
                      <ParamRow key={p.name} $active={p.active}>
                        <Grip />
                        <ParamName>{p.name}</ParamName>
                        {p.type === 'number' && <NumberField>0</NumberField>}
                        {p.type === 'bool' && <CheckField />}
                        {p.type === 'trigger' && <CheckField $round />}
                      </ParamRow>
                    ))}
                  </ParamList>
                  <GraphColumn>
                    <Graph>
                      <LinesSvg width='874' height='414' viewBox='546 141 874 414'>
                        {LINKS.map((l) => (
                          <line key={l.join()} x1={l[0]} y1={l[1]} x2={l[2]} y2={l[3]} stroke='#8b8b8b' strokeWidth='2' />
                        ))}
                        <line x1='823' y1='318' x2='823' y2='346' stroke='#8a5a10' strokeWidth='2' />
                        <Tri x={823} y={332} fill='#c07c12' />
                        <Tri x={933} y={306} a={180} />
                        <Tri x={935} y={318} />
                        <Tri x={986} y={337} a={90} />
                        <Tri x={984} y={348} a={-90} />
                        <Tri x={1014} y={376} a={90} />
                        <Tri x={1011} y={385} a={-90} />
                        <Tri x={823} y={428} />
                        <Tri x={759} y={384} a={180} />
                        <Tri x={900} y={387} />
                        <Tri x={755} y={461} a={180} />
                        <Tri x={897} y={465} />
                      </LinesSvg>
                      <StateNode $x={733} $y={162} $short $fill='red'>Exit</StateNode>
                      <StateNode $x={630} $y={298} $short $fill='teal'>Any State</StateNode>
                      <StateNode $x={774} $y={298} $short $fill='green'>Entry</StateNode>
                      <StateNode $x={760} $y={346} $fill='orange'>Idle Walk Run Blend</StateNode>
                      <StateNode $x={623} $y={408}>JumpStart</StateNode>
                      <StateNode $x={897} $y={408}>JumpLand</StateNode>
                      <StateNode $x={760} $y={483}>InAir</StateNode>
                      <StateNode $x={972} $y={251}>pose3</StateNode>
                      <StateNode $x={1075} $y={312}>pose2</StateNode>
                      <StateNode $x={1130} $y={388}>pose1</StateNode>
                    </Graph>
                    <PathBar>Starter Assets/Runtime/ThirdPersonController/Character/Animations/StarterAssetsThirdPerson.controller</PathBar>
                  </GraphColumn>
                </AnimatorBody>
              </Panel>
            </TopRow>
            <ProjectPanel>
              <TabStrip>
                <Tab $w={92} $pl={8}><FileText size={13} fill='#c0c0c0' stroke='#333' />Console</Tab>
                <Tab $w={82} $active $pl={8}><Folder size={13} fill='#c0c0c0' strokeWidth={0} />Project</Tab>
                <Tab $w={100} $pl={9}><Clock size={13} fill='#c0c0c0' stroke='#333' />Animation</Tab>
              </TabStrip>
              <SubBar $h={20}>
                <AddButton><Plus size={16} /><Caret /></AddButton>
                <SearchBox $w={420} $r={3} $ml={841}><Search size={9} color='#bbb' /></SearchBox>
              </SubBar>
              <ProjectBody>
                <TreePane>
                  {projectTree.map((t, i) => t.gap ? <TreeGap key={i} /> : (
                    <TreeRow key={t.name} $depth={t.depth} $bold={t.bold} $selected={t.selected}>
                      <TreeArrow>
                        {t.open && <Arrow $open />}
                        {t.closed && <Arrow />}
                      </TreeArrow>
                      <TreeIcon>{treeIcon(t.icon)}</TreeIcon>
                      {t.name}
                    </TreeRow>
                  ))}
                  <ScrollRail>
                    <UpCaret $s={3} />
                    <ScrollThumb $h={132} />
                    <Spacer />
                    <Caret $s={3} />
                  </ScrollRail>
                </TreePane>
                <BrowserPane>
                  <Breadcrumbs>
                    Assets <ChevronRight size={11} /> DTI Assets <ChevronRight size={11} /> <CrumbNow>Pose Animations</CrumbNow>
                  </Breadcrumbs>
                  <AssetGrid>
                    {assets.map((a, i) => (
                      <Tile key={i}>
                        <AssetIcon />
                        <TileLabel>{a}</TileLabel>
                      </Tile>
                    ))}
                  </AssetGrid>
                  <BrowserFoot>
                    <ZoomSlider><ZoomKnob /></ZoomSlider>
                  </BrowserFoot>
                </BrowserPane>
              </ProjectBody>
            </ProjectPanel>
          </LeftColumn>
          <Inspector />
        </Workspace>
        <StatusBar>
          <BugOff size={14} />
          <Slashed><Database size={14} /></Slashed>
          <RefreshCwOff size={14} />
          <CircleCheck size={14} />
        </StatusBar>
      </Window>

      <PasteEdge />
      <TransitionShot
        x={1209}
        y={18}
        w={264}
        h={375}
        topW={0}
        zoom={1}
        tabbed
        hasExit
        title='pose1 -> Idle Walk Run Blend'
        sizes={{ header: 36, headerPt: 4, head: 17, row: 18, foot: 16, section: 43, exit: 18, settings: 14, settingsPb: 0, blend: 21, blendPb: 2, cond: 13 }}
        timeline={{
          start: 4,
          step: 48,
          curve: 239,
          colX: 4,
          colW: 12,
          colH: 78,
          clips: [
            { label: 'pose1', x: 4, y: 57, w: 48 },
            { label: 'Idle Walk Run Blend', x: 4, y: 79, w: 238, blue: true },
          ],
        }}
        conditions={[]}
      />
      <TransitionShot
        x={1217}
        y={478}
        w={285}
        h={389}
        topW={5}
        zoom={1.075}
        title='Idle Walk Run Blend -> pose1'
        sizes={{ header: 42, headerPt: 4, head: 12, row: 20, foot: 15, section: 44, exit: 18, settings: 13, settingsPb: 5, blend: 19, blendPb: 5, cond: 14 }}
        timeline={{
          start: 7,
          step: 42,
          curve: 224,
          colX: 193,
          colW: 11,
          colH: 56,
          clips: [
            { label: '', x: 7, y: 56, w: 208 },
            { label: 'Idle Walk Run Blend', x: 7, y: 56, w: 197, blue: true, taper: true },
            { label: 'pose1', x: 193, y: 78, w: 40, blue: true },
          ],
        }}
        conditions={[{ name: 'Pose1' }, { name: 'Grounded', value: 'true' }]}
      />
      <InkBox />
      <InkLayer width='1668' height='1001' viewBox='0 0 1668 1001'>
        {INK.map((pts, i) => (
          <path key={i} d={smooth(pts)} fill='none' stroke='#fff' strokeWidth='4.5' strokeLinecap='round' strokeLinejoin='round' />
        ))}
      </InkLayer>
      <Note $x={833} $y={72} $size={28} $ls={4}>Pose to idle transition</Note>
      <Note $x={1173} $y={445} $size={29} $ls={5} $rot={-1}>Idle to pose transition</Note>
      <Note $x={311} $y={422} $size={33} $ls={5}>Triggers to</Note>
      <Note $x={323} $y={464} $size={33} $ls={6}>set up</Note>
      <Note $x={293} $y={746} $size={37} $ls={4}>Poses to choose from</Note>
    </Page>
  );
};

export default App;
